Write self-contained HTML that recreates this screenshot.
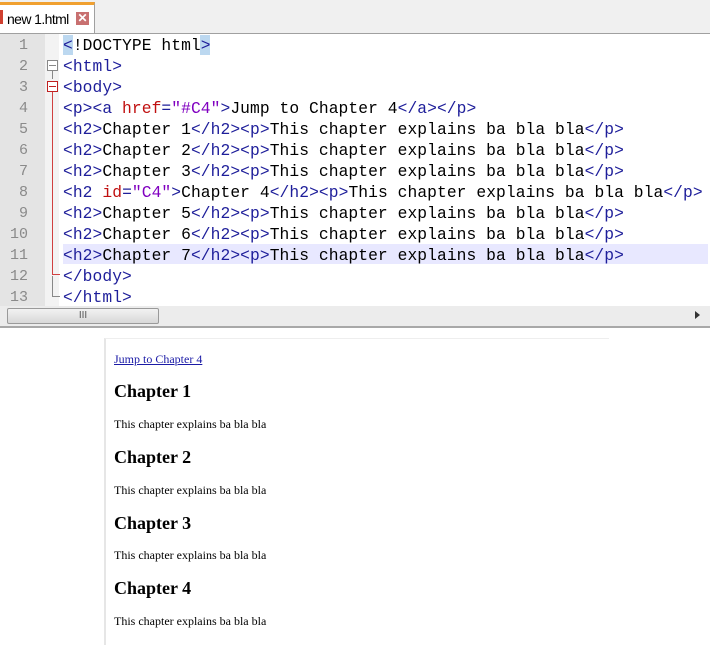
<!DOCTYPE html>
<html><head><style>
body{margin:0;width:710px;height:644px;background:#fff;position:relative;overflow:hidden;font-family:"Liberation Sans",sans-serif}
.tabbar{position:absolute;left:0;top:0;width:710px;height:33px;background:#f0f0f0;border-bottom:1px solid #a0a0a0}
.tab{position:absolute;left:0;top:2px;width:95px;height:31px;background:#fff;border-top:3px solid #f0a030;border-right:1px solid #a0a0a0;box-sizing:border-box;font-size:14px;padding:6px 0 0 7px;color:#000;letter-spacing:-0.6px}
.x{position:absolute;left:76px;top:7px;width:13px;height:13px;background:#c87070;color:#fff;font-size:12px;line-height:13px;text-align:center;font-weight:bold;letter-spacing:0}
.gut{position:absolute;left:0;top:34px;width:45px;height:272px;background:#e4e4e4}
.fold{position:absolute;left:45px;top:34px;width:14px;height:272px;background:#f3f3f3}
.code{position:absolute;left:0;top:34px;width:710px}
.ln{position:absolute;left:0;width:28px;text-align:right;font:15px "Liberation Mono",monospace;color:#8a8a8a}
.cl{position:absolute;left:63px;font:16.3px "Liberation Mono",monospace;white-space:pre;color:#000;letter-spacing:0.07px}
.t{color:#1e1e9a}.a{color:#c01010}.v{color:#8000c0}
.sb{position:absolute;left:0;top:306px;width:710px;height:20px;background:#ececec;border-bottom:2px solid #a8a8a8}
.thumb{position:absolute;left:7px;top:2px;width:152px;height:16px;background:linear-gradient(#f2f2f2,#d8d8d8);border:1px solid #9a9a9a;border-radius:2px;box-sizing:border-box;text-align:center;font-size:10px;line-height:14px;color:#555}
.pane{position:absolute;left:104px;top:338px;width:503px;height:306px;background:#fff;border-left:2px solid #e6e6e6;border-top:1px solid #eee;font-family:"Liberation Serif",serif;color:#000}
.pane p{position:absolute;left:8px;margin:0;font-size:12px}
.pane h2{position:absolute;left:8px;margin:0;font-size:18px;font-weight:bold}
</style></head><body>
<div class="tabbar"><div class="tab">new 1.html<span class="x">✕</span></div></div>
<div style="position:absolute;left:0;top:10px;width:3px;height:14px;background:#d04030"></div>
<div class="gut"></div><div class="fold"></div>
<div style="position:absolute;left:63px;top:244px;width:645px;height:20px;background:#e8e8ff"></div>
<div style="position:absolute;left:63px;top:35px;width:10px;height:20px;background:#bcd8f0"></div>
<div style="position:absolute;left:200px;top:35px;width:10px;height:20px;background:#bcd8f0"></div>
<div style="position:absolute;left:47px;top:60px;width:9px;height:9px;border:1px solid #888;background:#fff"></div>
<div style="position:absolute;left:49px;top:65px;width:7px;height:1px;background:#888"></div>
<div style="position:absolute;left:47px;top:81px;width:9px;height:9px;border:1px solid #c02020;background:#fff"></div>
<div style="position:absolute;left:49px;top:86px;width:7px;height:1px;background:#c02020"></div>
<div style="position:absolute;left:52px;top:71px;width:1px;height:8px;background:#888"></div>
<div style="position:absolute;left:52px;top:92px;width:1px;height:182px;background:#d04040"></div>
<div style="position:absolute;left:52px;top:274px;width:8px;height:1px;background:#d04040"></div>
<div style="position:absolute;left:52px;top:276px;width:1px;height:20px;background:#888"></div>
<div style="position:absolute;left:52px;top:296px;width:8px;height:1px;background:#888"></div>
<div class="code">
<div class="ln" style="top:3px">1</div><div class="ln" style="top:24px">2</div><div class="ln" style="top:45px">3</div><div class="ln" style="top:66px">4</div><div class="ln" style="top:87px">5</div><div class="ln" style="top:108px">6</div><div class="ln" style="top:129px">7</div><div class="ln" style="top:150px">8</div><div class="ln" style="top:171px">9</div><div class="ln" style="top:192px">10</div><div class="ln" style="top:213px">11</div><div class="ln" style="top:234px">12</div><div class="ln" style="top:255px">13</div>
<div class="cl" style="top:2px"><span class="t">&lt;</span>!DOCTYPE html<span class="t">&gt;</span></div>
<div class="cl" style="top:23px"><span class="t">&lt;html&gt;</span></div>
<div class="cl" style="top:44px"><span class="t">&lt;body&gt;</span></div>
<div class="cl" style="top:65px"><span class="t">&lt;p&gt;&lt;a </span><span class="a">href</span><span class="t">=</span><span class="v">"#C4"</span><span class="t">&gt;</span>Jump to Chapter 4<span class="t">&lt;/a&gt;&lt;/p&gt;</span></div>
<div class="cl" style="top:86px"><span class="t">&lt;h2&gt;</span>Chapter 1<span class="t">&lt;/h2&gt;&lt;p&gt;</span>This chapter explains ba bla bla<span class="t">&lt;/p&gt;</span></div>
<div class="cl" style="top:107px"><span class="t">&lt;h2&gt;</span>Chapter 2<span class="t">&lt;/h2&gt;&lt;p&gt;</span>This chapter explains ba bla bla<span class="t">&lt;/p&gt;</span></div>
<div class="cl" style="top:128px"><span class="t">&lt;h2&gt;</span>Chapter 3<span class="t">&lt;/h2&gt;&lt;p&gt;</span>This chapter explains ba bla bla<span class="t">&lt;/p&gt;</span></div>
<div class="cl" style="top:149px"><span class="t">&lt;h2 </span><span class="a">id</span><span class="t">=</span><span class="v">"C4"</span><span class="t">&gt;</span>Chapter 4<span class="t">&lt;/h2&gt;&lt;p&gt;</span>This chapter explains ba bla bla<span class="t">&lt;/p&gt;</span></div>
<div class="cl" style="top:170px"><span class="t">&lt;h2&gt;</span>Chapter 5<span class="t">&lt;/h2&gt;&lt;p&gt;</span>This chapter explains ba bla bla<span class="t">&lt;/p&gt;</span></div>
<div class="cl" style="top:191px"><span class="t">&lt;h2&gt;</span>Chapter 6<span class="t">&lt;/h2&gt;&lt;p&gt;</span>This chapter explains ba bla bla<span class="t">&lt;/p&gt;</span></div>
<div class="cl" style="top:212px"><span class="t">&lt;h2&gt;</span>Chapter 7<span class="t">&lt;/h2&gt;&lt;p&gt;</span>This chapter explains ba bla bla<span class="t">&lt;/p&gt;</span></div>
<div class="cl" style="top:233px"><span class="t">&lt;/body&gt;</span></div>
<div class="cl" style="top:254px"><span class="t">&lt;/html&gt;</span></div>
</div>
<div class="sb"><div class="thumb">III</div><div style="position:absolute;left:695px;top:5px;width:0;height:0;border-left:5px solid #333;border-top:4px solid transparent;border-bottom:4px solid transparent"></div></div>
<div style="position:absolute;left:606px;top:352px;width:1px;height:92px;background:#999"></div>
<div class="pane">
<p style="top:13px;color:#1a1aa6;text-decoration:underline">Jump to Chapter 4</p>
<h2 style="top:42px">Chapter 1</h2>
<p style="top:78px">This chapter explains ba bla bla</p>
<h2 style="top:108px">Chapter 2</h2>
<p style="top:144px">This chapter explains ba bla bla</p>
<h2 style="top:174px">Chapter 3</h2>
<p style="top:209px">This chapter explains ba bla bla</p>
<h2 style="top:239px">Chapter 4</h2>
<p style="top:275px">This chapter explains ba bla bla</p>
</div>
</body></html>
